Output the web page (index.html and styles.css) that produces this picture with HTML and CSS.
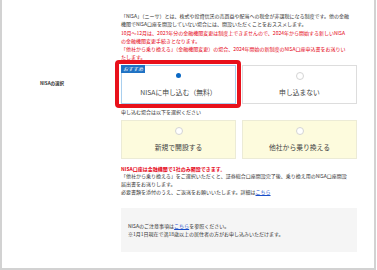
FILE: index.html
```html
<!DOCTYPE html>
<html lang="ja">
<head>
<meta charset="utf-8">
<link rel="stylesheet" href="styles.css">
</head>
<body>
<div class="frame">
  <div class="form">
    <div class="intro">
      <span class="line">「NISA」（ニーサ）とは、株式や投資信託の売買益や配当への税金が非課税になる制度です。他の金融</span>
      <span class="line">機関でNISA口座を開設していない場合には、開設いただくことをおススメします。</span>
      <span class="line red">10月～12月は、2023年分の金融機関変更は制度上できませんので、2024年から開始する新しいNISA</span>
      <span class="line red">の金融機関変更手続きとなります。</span>
      <span class="line red">「他社から乗り換える」（金融機関変更）の場合、2024年開始の新制度のNISA口座申込書をお送りい</span>
      <span class="line red">たします。</span>
    </div>

    <div class="label">NISAの選択</div>

    <div class="options">
      <div class="opt opt-selected">
        <span class="badge">おすすめ</span>
        <span class="radio radio-on"></span>
        <span class="opt-text">NISAに申し込む（無料）</span>
      </div>
      <div class="opt">
        <span class="radio"></span>
        <span class="opt-text">申し込まない</span>
      </div>
    </div>

    <div class="caption">申し込む場合は以下を選択ください</div>

    <div class="options">
      <div class="opt opt-sub">
        <span class="radio"></span>
        <span class="opt-text">新規で開設する</span>
      </div>
      <div class="opt opt-sub">
        <span class="radio"></span>
        <span class="opt-text">他社から乗り換える</span>
      </div>
    </div>

    <div class="notes">
      <span class="warn">NISA口座は金融機関で1社のみ開設できます。</span>
      <span class="line">「他社から乗り換える」をご選択いただくと、証券総合口座開設完了後、乗り換え用のNISA口座開設</span>
      <span class="line">届出書をお送りします。</span>
      <span class="line">必要書類を添付のうえ、ご返送をお願いいたします。詳細は<a class="link" href="#">こちら</a></span>
    </div>

    <div class="info">
      <span class="line">NISAのご注意事項は<a class="link" href="#">こちら</a>を参照ください。</span>
      <span class="line">※1月1日現在で満18歳以上の居住者の方がお申し込みいただけます。</span>
    </div>
  </div>
</div>
</body>
</html>
```

FILE: styles.css
```css
* {
  box-sizing: border-box;
}

html, body {
  margin: 0;
  padding: 0;
  background: #ffffff;
}

body {
  font-family: "Noto Sans CJK JP", "Noto Sans", sans-serif;
  color: #333333;
  font-size: 5px;
}

.frame {
  width: 376px;
  height: 270px;
  border: 2px solid #d2d2d2;
  border-top: 0;
}

.form {
  display: grid;
  grid-template-columns: 119px 236px;
  padding-top: 12px;
}

.form > * {
  grid-column: 2;
}

.line,
.warn {
  display: block;
  white-space: nowrap;
}

.intro {
  line-height: 8.3px;
}

.red {
  color: #e50012;
}

.label {
  grid-column: 1;
  grid-row: 2;
  align-self: center;
  padding-left: 38px;
  font-size: 4.5px;
  font-weight: 700;
  color: #333333;
  line-height: 8px;
}

.options {
  display: flex;
  gap: 6px;
  margin-top: 3px;
}

.options + .caption + .options {
  margin-top: 4px;
}

.opt {
  position: relative;
  width: 115px;
  height: 39px;
  border: 1px solid #dddddd;
  background: #ffffff;
  display: flex;
  flex-direction: column;
  align-items: center;
  padding-top: 6px;
}

.opt-selected {
  border-color: #a9cfee;
}

.opt-selected::after {
  content: "";
  position: absolute;
  top: -6px;
  left: -7px;
  right: -6px;
  bottom: -5px;
  border: 4px solid #e8111b;
  border-radius: 4px;
}

.opt-sub {
  background: #fdfbdd;
  border-color: #ecebd6;
}

.badge {
  position: absolute;
  top: -1px;
  left: -1px;
  height: 8px;
  padding: 0 2px;
  background: #1f72c4;
  color: #ffffff;
  font-size: 5px;
  font-style: italic;
  line-height: 8px;
}

.radio {
  width: 8px;
  height: 8px;
  border-radius: 50%;
  border: 1px solid #d4d4d4;
  background: #ffffff;
  display: flex;
  align-items: center;
  justify-content: center;
}

.radio-on {
  border-color: #ffffff;
}

.radio-on::before {
  content: "";
  width: 5px;
  height: 5px;
  border-radius: 50%;
  background: #0a68c4;
}

.opt-text {
  margin-top: 8px;
  font-size: 6.8px;
  line-height: 8px;
  color: #444444;
  white-space: nowrap;
}

.caption {
  margin-top: 4px;
  line-height: 8px;
}

.notes {
  margin-top: 7px;
  line-height: 8.3px;
}

.warn {
  color: #e50012;
  font-weight: 700;
  line-height: 6px;
}

.link {
  color: #1a4fc9;
  text-decoration: underline;
}

.info {
  margin-top: 11px;
  background: #f5f5f5;
  padding: 14px 7px;
  line-height: 8px;
}
```
